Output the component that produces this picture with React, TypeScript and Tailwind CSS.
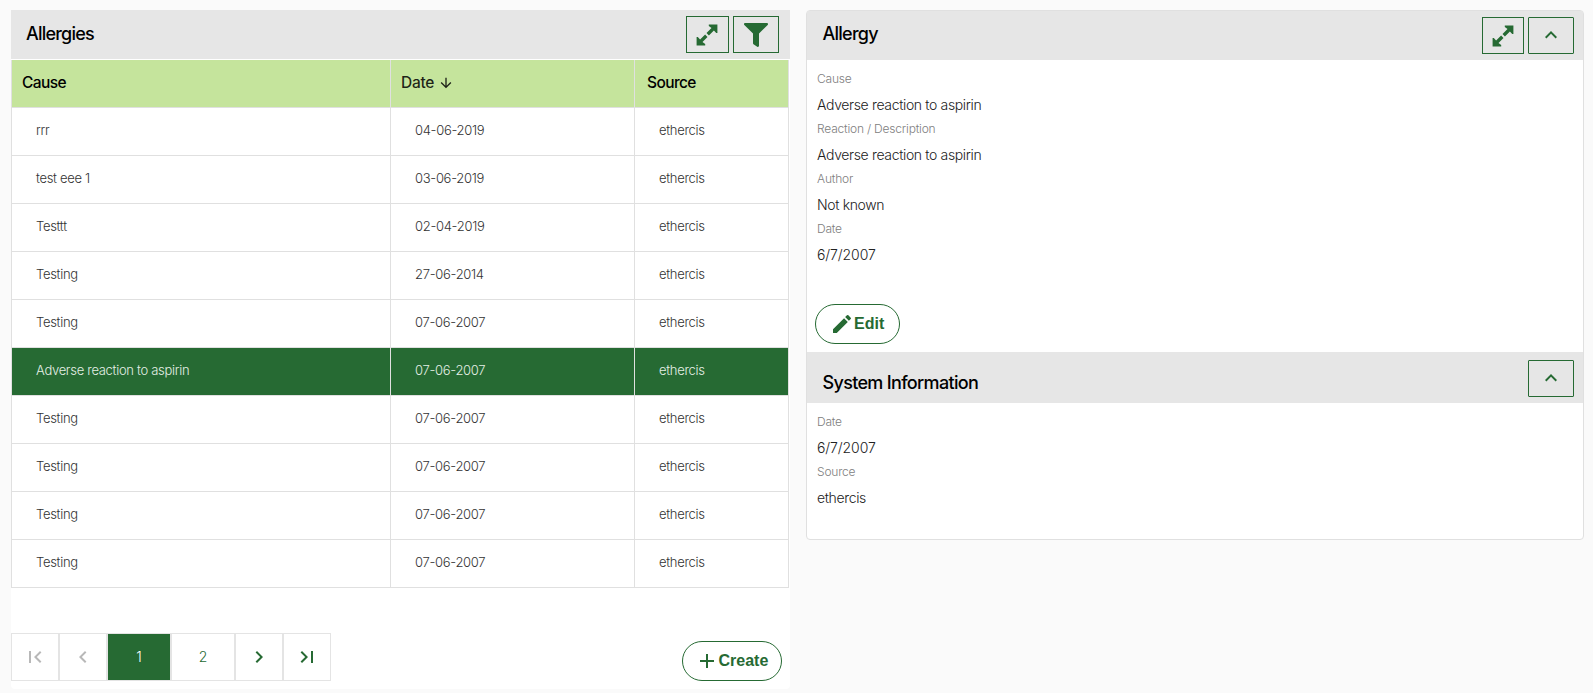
import React from "react";

const rows = [
  ["rrr", "04-06-2019"],
  ["test eee 1", "03-06-2019"],
  ["Testtt", "02-04-2019"],
  ["Testing", "27-06-2014"],
  ["Testing", "07-06-2007"],
  ["Adverse reaction to aspirin", "07-06-2007"],
  ["Testing", "07-06-2007"],
  ["Testing", "07-06-2007"],
  ["Testing", "07-06-2007"],
  ["Testing", "07-06-2007"],
];

const SELECTED = 5;

function Icon({ d, className = "size-6" }: { d: string; className?: string }) {
  return (
    <svg viewBox="0 0 24 24" className={`shrink-0 fill-current ${className}`} aria-hidden="true">
      <path d={d} />
    </svg>
  );
}

const UP = "M7.41 15.41L12 10.83l4.59 4.58L18 14l-6-6-6 6z";
const LEFT = "M15.41 16.59L10.83 12l4.58-4.59L14 6l-6 6 6 6z";
const RIGHT = "M8.59 16.59L13.17 12 8.59 7.41 10 6l6 6-6 6z";
const FIRST = "M18.41 16.59L13.82 12l4.59-4.59L17 6l-6 6 6 6zM6 6h2v12H6z";
const LAST = "M5.59 7.41L10.18 12l-4.59 4.59L7 18l6-6-6-6zM16 6h2v12h-2z";
const DOWN = "M20 12l-1.41-1.41L13 16.17V4h-2v12.17l-5.58-5.59L4 12l8 8z";
const PLUS = "M19 13h-6v6h-2v-6H5v-2h6V5h2v6h6z";
const PENCIL =
  "M3 17.25V21h3.75L17.81 9.94l-3.75-3.75zM20.71 7.04a1 1 0 0 0 0-1.41l-2.34-2.34a1 1 0 0 0-1.41 0l-1.83 1.83 3.75 3.75z";

function Expand() {
  return (
    <svg viewBox="0 0 22 22" className="mr-px size-[22px] fill-current" aria-hidden="true">
      <path d="M12.8 0.6H21.4V8.9H20.2L17.9 6.5 12.9 11.5 10.5 9.1 15.5 4.1 12.8 2zM9.2 21.4H0.6V13.1H1.8L4.1 15.5 9.1 10.5 11.5 12.9 6.5 17.9 9.2 20z" />
    </svg>
  );
}

function Filter() {
  return (
    <svg viewBox="0 0 512 512" className="size-6 fill-current" aria-hidden="true">
      <path d="M487.976 0H24.028C2.71 0-8.047 25.866 7.058 40.971L192 225.941V432c0 7.831 3.821 15.17 10.237 19.662l80 55.98C298.02 518.69 320 507.493 320 487.98V225.941l184.947-184.97C520.021 25.896 509.338 0 487.976 0z" />
    </svg>
  );
}

function ToolButton({ wide, label, children }: { wide: string; label: string; children: React.ReactNode }) {
  return (
    <button
      aria-label={label}
      className={`flex h-[37px] items-center justify-center border border-[#266a33] text-[#266a33] ${wide}`}
    >
      {children}
    </button>
  );
}

function Field({ label, value, tracking = "tracking-[-0.35px]" }: { label: string; value: string; tracking?: string }) {
  return (
    <div className="h-[50px] pl-[10px]">
      <div className="h-[22px] text-[12px] leading-[18px] font-light tracking-[-0.2px] text-[#808080]">{label}</div>
      <div className={`text-[14px] leading-[26px] font-light text-[#222] ${tracking}`}>{value}</div>
    </div>
  );
}

function PageButton({ children, className }: { children: React.ReactNode; className: string }) {
  return (
    <button className={`flex h-12 items-center justify-center border border-[#e4e4e4] text-[14px] font-light ${className}`}>
      {children}
    </button>
  );
}

export default function App() {
  return (
    <div className="flex h-[693px] w-[1593px] items-start gap-4 bg-[#fafafa] pt-[10px] pl-[11px] font-['Inter','Liberation_Sans',sans-serif]">
      <section className="flex h-[679px] w-[779px] flex-col rounded-b bg-white">
        <header className="flex h-[49px] items-start bg-[#e6e6e6] pt-[6px] pr-[11px] pl-[15px]">
          <h1 className="grow pt-[6px] text-[18px] leading-6 font-medium tracking-[-0.78px] text-black">Allergies</h1>
          <div className="flex gap-1">
            <ToolButton wide="w-[43px]" label="Expand">
              <Expand />
            </ToolButton>
            <ToolButton wide="w-[46px]" label="Filter">
              <Filter />
            </ToolButton>
          </div>
        </header>
        <div className="mt-px w-[778px] border-x border-[#e0e0e0]">
          <div className="grid h-12 grid-cols-[379px_244px_1fr] border-b border-[#e0e0e0] bg-[#c5e49c] text-[15.5px] leading-[46px] font-medium tracking-[-0.6px] text-black">
            <div className="border-r border-[#e0e0e0] pl-[10px]">Cause</div>
            <div className="flex items-start gap-1 border-r border-[#e0e0e0] pl-[10px] tracking-[-0.3px] text-black/85">
              <span>Date</span>
              <Icon d={DOWN} className="mt-[15px] size-4" />
            </div>
            <div className="pl-[12px]">Source</div>
          </div>
          {rows.map(([cause, date], i) => (
            <div
              key={i}
              className={`grid h-12 grid-cols-[379px_244px_1fr] border-b border-[#e0e0e0] text-[13px] leading-[45px] font-light tracking-[-0.3px] ${
                i === SELECTED ? "bg-[#266a33] text-[#e4efe5]" : "text-[#333]"
              }`}
            >
              <div className="border-r border-[#e0e0e0] pl-6">{cause}</div>
              <div className="border-r border-[#e0e0e0] pl-6">{date}</div>
              <div className="pl-6">ethercis</div>
            </div>
          ))}
        </div>
        <div className="flex pt-[45px]">
          <nav className="flex grow text-[#266a33]">
            <PageButton className="w-12 text-[#b8b8b8]">
              <Icon d={FIRST} />
            </PageButton>
            <PageButton className="w-12 text-[#b8b8b8]">
              <Icon d={LEFT} />
            </PageButton>
            <PageButton className="w-16 bg-[#266a33] pb-px text-white">1</PageButton>
            <PageButton className="w-16 pb-px">2</PageButton>
            <PageButton className="w-12">
              <Icon d={RIGHT} />
            </PageButton>
            <PageButton className="w-12">
              <Icon d={LAST} />
            </PageButton>
          </nav>
          <button className="mt-2 mr-2 flex h-10 w-[100px] items-center rounded-full border border-[#266a33] pl-3 font-['Liberation_Sans',Arial,sans-serif] text-[16px] font-bold text-[#266a33]">
            <Icon d={PLUS} />
            <span className="-ml-[0.5px]">Create</span>
          </button>
        </div>
      </section>

      <section className="h-[530px] w-[778px] rounded border border-[#e0e0e0] bg-white">
        <header className="flex h-[49px] items-start bg-[#e6e6e6] pt-[6px] pr-[9px] pl-[15.5px]">
          <h2 className="grow pt-[5px] text-[18px] leading-6 font-medium tracking-[-0.75px] text-black">Allergy</h2>
          <div className="flex gap-1">
            <ToolButton wide="w-[42px]" label="Expand">
              <Expand />
            </ToolButton>
            <ToolButton wide="w-[46px] rounded-[1px] pb-px" label="Collapse">
              <Icon d={UP} />
            </ToolButton>
          </div>
        </header>
        <div className="h-[292px] pt-[10px]">
          <Field label="Cause" value="Adverse reaction to aspirin" />
          <Field label="Reaction / Description" value="Adverse reaction to aspirin" />
          <Field label="Author" value="Not known" />
          <Field label="Date" value="6/7/2007" tracking="tracking-[-0.1px]" />
          <button className="mt-[34px] ml-2 flex h-10 w-[85px] items-center rounded-full border border-[#266a33] pl-[14px] font-['Liberation_Sans',Arial,sans-serif] text-[16px] font-bold text-[#266a33]">
            <Icon d={PENCIL} />
            <span>Edit</span>
          </button>
        </div>
        <header className="flex h-[51px] items-start bg-[#e6e6e6] pt-2 pr-[9px] pl-[15.5px]">
          <h2 className="grow pt-[11px] text-[18px] leading-6 font-medium tracking-[-0.67px] text-black">System Information</h2>
          <ToolButton wide="w-[46px] rounded-[1px] pb-px" label="Collapse">
            <Icon d={UP} />
          </ToolButton>
        </header>
        <div className="pt-[10px]">
          <Field label="Date" value="6/7/2007" tracking="tracking-[-0.1px]" />
          <Field label="Source" value="ethercis" />
        </div>
      </section>
    </div>
  );
}
